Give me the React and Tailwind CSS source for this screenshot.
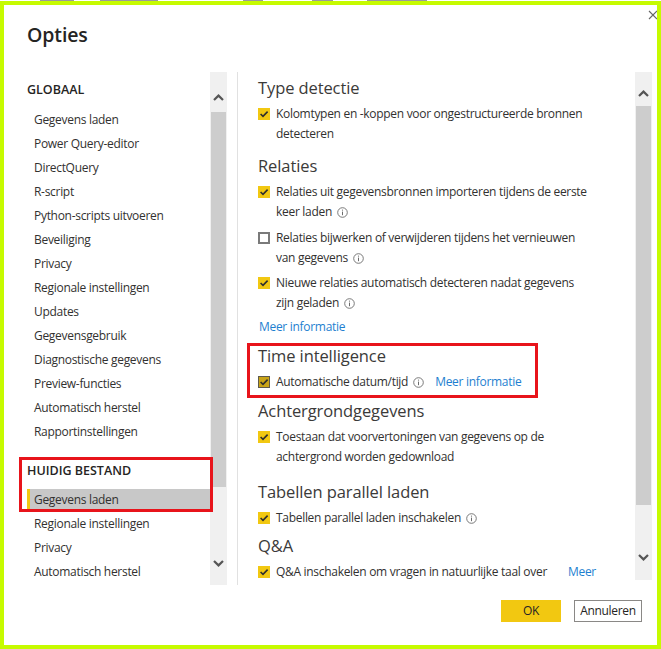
import React from "react";

const Chevron = ({ down }) => (
  <svg width="11" height="7" viewBox="0 0 11 7" className={down ? "rotate-180" : ""}>
    <path d="M1 6 L5.5 1.6 L10 6" fill="none" stroke="#555" strokeWidth="2.2" strokeLinejoin="miter" />
  </svg>
);

const Info = () => (
  <svg width="11" height="11" viewBox="0 0 11 11" className="inline-block shrink-0">
    <circle cx="5.5" cy="5.5" r="4.8" fill="none" stroke="#6b6b6b" strokeWidth="0.9" />
    <line x1="5.5" y1="4.6" x2="5.5" y2="8.2" stroke="#6b6b6b" strokeWidth="1" />
    <circle cx="5.5" cy="3.1" r="0.6" fill="#6b6b6b" />
  </svg>
);

const Check = ({ checked = true, focus = false }) => {
  if (!checked)
    return <span className="mt-[4px] w-[12px] h-[12px] shrink-0 border-2 border-[#7a7a7a] bg-white" />;
  return (
    <span
      className={
        "mt-[4px] w-[12px] h-[12px] shrink-0 flex items-center justify-center " +
        (focus ? "bg-[#c9a418] border border-[#5e5a4c]" : "bg-[#f2c811]")
      }
    >
      <svg width="10" height="10" viewBox="0 0 10 10">
        <path d="M1.6 5 L4 7.4 L8.6 2.6" fill="none" stroke="#2e2e2e" strokeWidth="1.6" />
      </svg>
    </span>
  );
};

const Heading = ({ children, mt }) => (
  <div className={"h-[32px] flex items-center text-[16.5px] tracking-[-0.1px] text-[#3b3a39] " + mt}>{children}</div>
);

const Item = ({ checked, focus, children, mt = "" }) => (
  <div className={"flex gap-[6px] leading-[20px] " + mt}>
    <Check checked={checked} focus={focus} />
    <div>{children}</div>
  </div>
);

const navGlobal = [
  "Gegevens laden",
  "Power Query-editor",
  "DirectQuery",
  "R-script",
  "Python-scripts uitvoeren",
  "Beveiliging",
  "Privacy",
  "Regionale instellingen",
  "Updates",
  "Gegevensgebruik",
  "Diagnostische gegevens",
  "Preview-functies",
  "Automatisch herstel",
  "Rapportinstellingen",
];

const Scrollbar = ({ topH, thumbH, bottomH, topPb, bottomPt }) => (
  <div className="w-[17px] h-full bg-[#f0f0f0] flex flex-col">
    <div className={"flex justify-center items-end " + topH + " " + topPb}>
      <Chevron />
    </div>
    <div className={"mt-[2px] ml-[1px] mr-[1px] bg-[#cdcdcd] " + thumbH} />
    <div className="flex-1" />
    <div className={"flex justify-center items-start " + bottomH + " " + bottomPt}>
      <Chevron down />
    </div>
  </div>
);

export default function App() {
  return (
    <div className="relative w-[661px] h-[649px] bg-white flex flex-col overflow-hidden font-['Open_Sans',sans-serif] text-[12px] text-[#323130] tracking-[-0.3px]">
      {/* background strip behind the dialog */}
      <div className="h-[1px] flex">
        <span className="ml-[40px] w-[34px] bg-[#9a9a9a]" />
        <span className="ml-[26px] w-[58px] bg-[#9a9a9a]" />
        <span className="ml-[85px] w-[20px] bg-[#9a9a9a]" />
        <span className="ml-[49px] w-[21px] bg-[#9a9a9a]" />
        <span className="ml-[34px] w-[60px] bg-[#9a9a9a]" />
      </div>

      <div className="flex-1 border-4 border-[#c6fb00] flex flex-col bg-white">
        {/* header */}
        <div className="h-[67px] flex justify-between">
          <div className="pl-[23px] pt-[16px] text-[19.5px] font-semibold tracking-[-0.1px] text-[#252423] leading-[28px]">Opties</div>
          <div className="pt-[5px]">
            <svg width="9" height="10" viewBox="0 0 9 10">
              <path d="M1 1 L9 9 M9 1 L1 9" stroke="#666" strokeWidth="1.1" />
            </svg>
          </div>
        </div>

        {/* body */}
        <div className="h-[513px] flex pl-[15px]">
          {/* nav */}
          <div className="w-[191px] overflow-hidden text-[#323130]">
            <div className="mt-[6px] mb-[6px] h-[24px] flex items-center pl-[8px] text-[12.5px] font-semibold tracking-[0px] text-[#252423]">GLOBAAL</div>
            {navGlobal.map((t) => (
              <div key={t} className="h-[24px] flex items-center pl-[15px]">
                {t}
              </div>
            ))}
            <div className="mt-[15px] h-[24px] flex items-center pl-[8px] text-[12.5px] font-semibold tracking-[0px] text-[#252423]">HUIDIG BESTAND</div>
            <div className="mt-[6px] ml-[8px] h-[22px] flex items-center bg-[#c8c8c8]">
              <span className="w-[3px] h-full bg-[#f2c811]" />
              <span className="pl-[4px]">Gegevens laden</span>
            </div>
            <div className="mt-[1px] h-[24px] flex items-center pl-[15px]">Regionale instellingen</div>
            <div className="h-[24px] flex items-center pl-[15px]">Privacy</div>
            <div className="h-[24px] flex items-center pl-[15px]">Automatisch herstel</div>
          </div>

          <Scrollbar topH="h-[38px]" topPb="pb-[9px]" thumbH="h-[375px]" bottomH="h-[34px]" bottomPt="pt-[9px]" />

          <div className="ml-[10px] w-px bg-[#e1e1e1]" />

          {/* content */}
          <div className="flex-1 flex">
            <div className="w-[397px] h-[508px] overflow-hidden pl-[20px]">
              <Heading mt="">Type detectie</Heading>
              <Item checked>
                Kolomtypen en -koppen voor ongestructureerde bronnen
                <br />
                detecteren
              </Item>

              <Heading mt="mt-[6px]">Relaties</Heading>
              <Item checked>
                Relaties uit gegevensbronnen importeren tijdens de eerste
                <br />
                <span className="inline-flex items-center gap-[5px]">
                  keer laden <Info />
                </span>
              </Item>
              <Item checked={false} mt="mt-[6px]">
                Relaties bijwerken of verwijderen tijdens het vernieuwen
                <br />
                <span className="inline-flex items-center gap-[5px]">
                  van gegevens <Info />
                </span>
              </Item>
              <Item checked mt="mt-[5px]">
                Nieuwe relaties automatisch detecteren nadat gegevens
                <br />
                <span className="inline-flex items-center gap-[5px]">
                  zijn geladen <Info />
                </span>
              </Item>
              <div className="mt-[4px] leading-[20px] pl-[1px] text-[#1e7fd0]">Meer informatie</div>

              <Heading mt="mt-[3px]">Time intelligence</Heading>
              <Item checked focus>
                <span className="inline-flex items-center gap-[5px]">
                  Automatische datum/tijd <Info />
                  <span className="ml-[6px] text-[#1e7fd0]">Meer informatie</span>
                </span>
              </Item>

              <Heading mt="mt-[3px]">Achtergrondgegevens</Heading>
              <Item checked>
                Toestaan dat voorvertoningen van gegevens op de
                <br />
                achtergrond worden gedownload
              </Item>

              <Heading mt="mt-[9px]">Tabellen parallel laden</Heading>
              <Item checked>
                <span className="inline-flex items-center gap-[5px]">
                  Tabellen parallel laden inschakelen <Info />
                </span>
              </Item>

              <Heading mt="mt-[2px]">Q&amp;A</Heading>
              <Item checked>
                <span className="whitespace-nowrap">
                  Q&amp;A inschakelen om vragen in natuurlijke taal over
                  <span className="ml-[21px] text-[#1e7fd0]">Meer</span>
                </span>
              </Item>
            </div>
            <div className="h-[508px]">
              <Scrollbar topH="h-[32px]" topPb="pb-[7px]" thumbH="h-[399px]" bottomH="h-[30px]" bottomPt="pt-[4px]" />
            </div>
          </div>
        </div>

        {/* footer */}
        <div className="flex justify-end gap-[13px] pr-[15px] pt-[15px]">
          <button className="w-[60px] h-[22px] bg-[#f2c811] text-[12px] text-[#252423]">OK</button>
          <button className="w-[68px] h-[22px] border border-[#8a8886] bg-white text-[12px] text-[#252423]">Annuleren</button>
        </div>
      </div>

      {/* annotation boxes */}
      <div className="absolute left-[19px] top-[457px] w-[194px] h-[55px] border-[3px] border-[#e8141b]" />
      <div className="absolute left-[247px] top-[343px] w-[291px] h-[55px] border-[3px] border-[#e8141b]" />
    </div>
  );
}
